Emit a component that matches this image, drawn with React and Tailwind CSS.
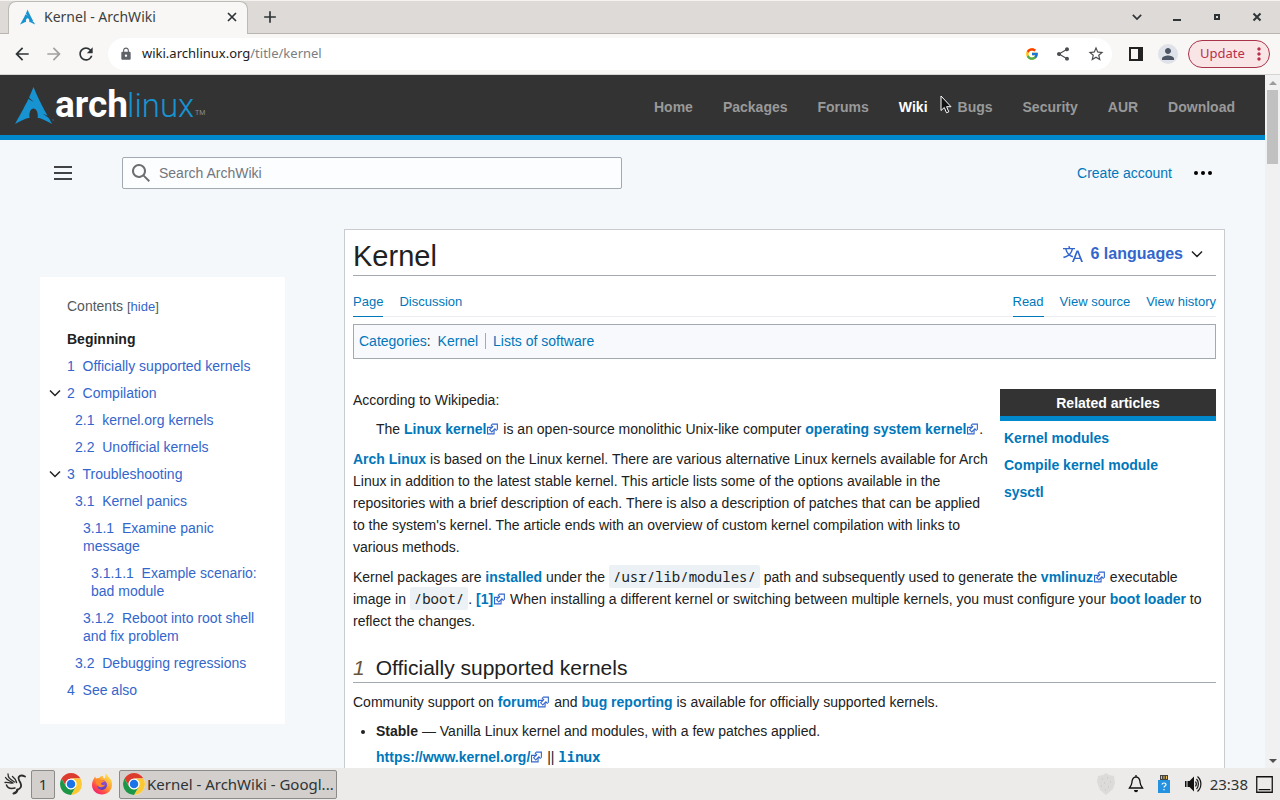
import React from "react";
import {
  MdArrowBack,
  MdArrowForward,
  MdRefresh,
  MdLock,
  MdShare,
  MdStarBorder,
  MdPerson,
  MdAdd,
  MdMoreVert,
} from "react-icons/md";
import { FcGoogle } from "react-icons/fc";
import { SiArchlinux } from "react-icons/si";

const NAV = ["Home", "Packages", "Forums", "Wiki", "Bugs", "Security", "AUR", "Download"];

const TOC = [
  { num: "1", text: "Officially supported kernels", level: 0 },
  { num: "2", text: "Compilation", level: 0, open: true },
  { num: "2.1", text: "kernel.org kernels", level: 1 },
  { num: "2.2", text: "Unofficial kernels", level: 1 },
  { num: "3", text: "Troubleshooting", level: 0, open: true },
  { num: "3.1", text: "Kernel panics", level: 1 },
  { num: "3.1.1", text: "Examine panic message", level: 2 },
  { num: "3.1.1.1", text: "Example scenario: bad module", level: 3 },
  { num: "3.1.2", text: "Reboot into root shell and fix problem", level: 2 },
  { num: "3.2", text: "Debugging regressions", level: 1 },
  { num: "4", text: "See also", level: 0 },
];

const INDENT = ["pl-0", "pl-2", "pl-4", "pl-6"];

function Chevron({ className }) {
  return (
    <svg viewBox="0 0 12 12" className={className} fill="none" stroke="currentColor" strokeWidth="1.5" aria-hidden="true">
      <path d="M1 3.5l5 5 5-5" />
    </svg>
  );
}

function ExternalIcon() {
  return (
    <svg viewBox="1 0.500 11 11" className="ml-px inline-block h-3 w-3 align-[-1px]" aria-hidden="true">
      <path fill="#fff" stroke="#36c" d="M1.5 4.518h5.982V10.5H1.5z" />
      <path fill="#36c" d="M5.765 1H11v5.39L9.427 7.937l-1.31-1.31L5.393 9.35l-2.69-2.688 2.81-2.808L4.2 2.544z" />
      <path fill="#fff" d="m9.995 2.004.022 4.885L8.2 5.07 5.32 7.95 4.09 6.723l2.882-2.88-1.85-1.852z" />
    </svg>
  );
}

function Link({ children, external }) {
  return (
    <a href="#" className="font-bold text-[#07b]">
      {children}
      {external && <ExternalIcon />}
    </a>
  );
}

function Code({ children }) {
  return (
    <code className="rounded-xs bg-[#ebf1f5] px-1 py-0.5 font-['Noto_Sans_Mono','DejaVu_Sans_Mono',monospace] text-sm leading-4">
      {children}
    </code>
  );
}

function ChromeLogo() {
  return (
    <svg viewBox="0 0 48 48" className="h-6 w-6 shrink-0" aria-hidden="true">
      <circle cx="24" cy="24" r="22" fill="#fff" />
      <path d="M24 13h19.05A22 22 0 0 0 4.95 13l9.52 16.5A11 11 0 0 1 24 13z" fill="#dc3c2e" />
      <path d="M33.53 29.5L24 46A22 22 0 0 0 43.05 13H24a11 11 0 0 1 9.53 16.5z" fill="#fcc934" />
      <path d="M14.47 29.5L4.95 13A22 22 0 0 0 24 46l9.53-16.5a11 11 0 0 1-19.06 0z" fill="#1e9648" />
      <circle cx="24" cy="24" r="10.5" fill="#fff" />
      <circle cx="24" cy="24" r="8.5" fill="#1a73e8" />
    </svg>
  );
}

function FirefoxLogo() {
  return (
    <svg viewBox="0 0 48 48" className="h-6 w-6" aria-hidden="true">
      <defs>
        <linearGradient id="ff-body" x1="0.85" y1="0.1" x2="0.2" y2="0.95">
          <stop offset="0" stopColor="#ffe14d" />
          <stop offset="0.45" stopColor="#ff9a2e" />
          <stop offset="0.75" stopColor="#ff4b4b" />
          <stop offset="1" stopColor="#f0206e" />
        </linearGradient>
        <linearGradient id="ff-core" x1="0.5" y1="0" x2="0.5" y2="1">
          <stop offset="0" stopColor="#9a4fe0" />
          <stop offset="1" stopColor="#5b3fc0" />
        </linearGradient>
      </defs>
      <path d="M31 3c5 4 6 8 9 10 3 4 5 8 4 14-1 10-9 18-20 18S4 37 4 26c0-6 2-10 4-13l2-4 2 4c2-1 4-1 6-1 2-3 5-4 8-4-1 2 0 4 4 5 1-4 1-7 1-10z" fill="url(#ff-body)" />
      <circle cx="24" cy="26" r="10" fill="url(#ff-core)" />
      <path d="M12 15c3-2 8-1 11 1 3 1 5 1 7 2-2 3-7 2-8 5 0 3 4 4 8 2-2 6-10 7-14 3-4-3-5-8-4-13z" fill="#ff8a2c" />
    </svg>
  );
}

function BirdLogo() {
  return (
    <svg viewBox="0 0 24 24" className="h-6 w-6" fill="none" stroke="#2c2c2c" strokeLinecap="round" strokeLinejoin="round" aria-hidden="true">
      <path d="M23 4.500c-2-1-5-1.500-6.200.5-1 2 .7 4 1.700 6 1.500 3.500 0 6-3.500 7" strokeWidth="1.800" />
      <path d="M15.500 17.500c-.3 2.200-1.800 3.500-4 4" strokeWidth="2" />
      <path d="M6 2c0 3.500 1.500 5 6.500 8M3.500 5.500c1.500 2.800 4 3 7.500 5.500M3 10.500c2.500-.3 4.500.2 7 .7" strokeWidth="1.300" />
      <path d="M4.500 13c1 3 4.500 4 8.500 3M10.500 4.500c2 1.500 3.500 3.500 4 6" strokeWidth="1.500" />
    </svg>
  );
}

function TabStrip() {
  return (
    <div className="flex h-[34px] shrink-0 items-stretch border-t border-[#f4f3f1] bg-[#dedad7] shadow-[inset_0_-1px_0_#b9b5b1]">
      <div className="ml-2 flex w-60 items-center rounded-t-lg border border-b-0 border-[#bdb9b5] bg-[#f8f7f6] pr-[7px] pb-[3px] pl-[11px]">
        <SiArchlinux className="h-4 w-4 text-[#1793d1]" />
        <span className="ml-2 flex-1 whitespace-nowrap text-[14px] text-[#3c3f40]">Kernel - ArchWiki</span>
        <button type="button" aria-label="Close tab" className="flex h-4 w-4 items-center justify-center text-[#2e3436]">
          <svg viewBox="0 0 16 16" className="h-4 w-4"><path d="M4 4l8 8M12 4l-8 8" stroke="currentColor" strokeWidth="1.700" /></svg>
        </button>
      </div>
      <button type="button" aria-label="New tab" className="ml-3 flex w-5 items-center justify-center pb-0.5 text-[#2e3436]">
        <MdAdd className="h-5 w-5" />
      </button>
      <div className="ml-auto flex items-center gap-6 pr-[15px] pb-0.5 text-[#2e3436]">
        <button type="button" aria-label="Search tabs" className="flex h-4 w-4 items-center justify-center">
          <Chevron className="h-2.5 w-2.5 stroke-2" />
        </button>
        <button type="button" aria-label="Minimize" className="flex h-4 w-4 items-center justify-center">
          <svg viewBox="0 0 16 16" className="h-4 w-4"><path d="M4 10h8v2H4z" fill="currentColor" /></svg>
        </button>
        <button type="button" aria-label="Maximize" className="flex h-4 w-4 items-center justify-center">
          <svg viewBox="0 0 16 16" className="h-4 w-4"><path d="M6 6h4v4H6z" fill="none" stroke="currentColor" strokeWidth="2" /></svg>
        </button>
        <button type="button" aria-label="Close window" className="flex h-4 w-4 items-center justify-center">
          <svg viewBox="0 0 16 16" className="h-4 w-4"><path d="M4.500 4.500l7 7M11.500 4.500l-7 7" stroke="currentColor" strokeWidth="2" /></svg>
        </button>
      </div>
    </div>
  );
}

function Toolbar() {
  return (
    <div className="flex h-[41px] shrink-0 items-center border-b border-[#d6d3d0] bg-[#f8f7f6] pr-2.5 pl-3 text-[#2e3436]">
      <div className="flex gap-3">
        <button type="button" aria-label="Back"><MdArrowBack className="h-5 w-5" /></button>
        <button type="button" aria-label="Forward" className="text-[#a3a19f]"><MdArrowForward className="h-5 w-5" /></button>
        <button type="button" aria-label="Reload"><MdRefresh className="h-5 w-5" /></button>
      </div>
      <div className="ml-3 flex h-8 flex-1 items-center rounded-full bg-white pr-[7px] pl-[11px]">
        <MdLock className="h-3.5 w-3.5 text-[#5f6368]" />
        <a href="#" className="ml-[9px] text-[13px] whitespace-nowrap text-[#202124]">
          wiki.archlinux.org<span className="text-[#7b7e81]">/title/kernel</span>
        </a>
        <div className="ml-auto flex items-center gap-4 text-[#4a4d50]">
          <FcGoogle className="h-3.5 w-3.5" />
          <button type="button" aria-label="Share"><MdShare className="h-4 w-4" /></button>
          <button type="button" aria-label="Bookmark"><MdStarBorder className="h-[18px] w-[18px]" /></button>
        </div>
      </div>
      <button type="button" aria-label="Side panel" className="ml-4">
        <svg viewBox="0 0 16 16" className="h-4 w-4"><path d="M1 1h14v14H1zm2 2v10h7V3z" fill="#222" fillRule="evenodd" /></svg>
      </button>
      <button type="button" aria-label="Profile" className="ml-3.5 flex h-5 w-5 items-center justify-center rounded-full bg-[#dfe2e8]">
        <MdPerson className="h-[18px] w-[18px] text-[#4c5564]" />
      </button>
      <button type="button" className="ml-2.5 flex h-7 w-[82px] items-center rounded-full border border-[#a8334a] bg-[#fae5e6] pl-[11px] text-[13px] text-[#b8304a]">
        Update
        <MdMoreVert className="ml-auto h-5 w-5" />
      </button>
    </div>
  );
}

function ArchHeader() {
  return (
    <header className="flex h-[65px] items-center border-b-[5px] border-[#08c] bg-[#333] pr-[30px] pl-[15px]">
      <a href="#" aria-label="Arch Linux" className="flex items-center">
        <SiArchlinux className="h-[39px] w-[39px] text-[#1793d1]" />
        <svg viewBox="0 0 152 56" className="h-14 w-[152px]">
          <text x="1" y="40" fontFamily="Roboto, sans-serif" fontSize="37" fontWeight="700" fill="#fff">arch</text>
          <text x="73" y="40" fontFamily="Roboto, sans-serif" fontSize="33" fontWeight="300" fill="#1793d1">linux</text>
          <text x="141" y="38" fontFamily="Roboto, sans-serif" fontSize="7" fill="#8a8a8a">TM</text>
        </svg>
      </a>
      <nav className="ml-auto flex gap-[30px] pt-1 text-sm font-bold text-[#999]">
        {NAV.map((item) => (
          <a key={item} href="#" className={item === "Wiki" ? "text-white" : ""}>{item}</a>
        ))}
      </nav>
    </header>
  );
}

function SearchRow() {
  return (
    <div className="mt-[17px] flex h-8 items-center px-3">
      <button type="button" aria-label="Main menu" className="text-[#404244]">
        <svg viewBox="0 0 22 16" className="h-4 w-[22px]"><path d="M2 1h18v2H2zM2 7h18v2H2zM2 13h18v2H2z" fill="currentColor" /></svg>
      </button>
      <form role="search" className="ml-12 flex h-8 max-w-[500px] flex-1 items-center rounded-xs border border-[#a2a9b1] bg-[#fcfdfe] pl-2">
        <svg viewBox="0 0 20 20" className="h-5 w-5 text-[#6c6f72]" aria-hidden="true">
          <path d="M12.200 13.600a7 7 0 1 1 1.400-1.400l5.400 5.400-1.400 1.400zM3 8a5 5 0 1 0 10 0A5 5 0 0 0 3 8z" fill="currentColor" />
        </svg>
        <input type="search" aria-label="Search ArchWiki" placeholder="Search ArchWiki" className="ml-2 min-w-0 flex-1 bg-transparent text-sm outline-none placeholder:text-[#72777d]" />
      </form>
      <div className="ml-auto flex items-center gap-[21px]">
        <a href="#" className="text-sm text-[#07b]">Create account</a>
        <button type="button" aria-label="Personal tools">
          <svg viewBox="0 0 20 20" className="h-5 w-5"><circle cx="3" cy="10" r="2" /><circle cx="10" cy="10" r="2" /><circle cx="17" cy="10" r="2" /></svg>
        </button>
      </div>
    </div>
  );
}

function Contents() {
  return (
    <nav aria-label="Contents" className="mt-12 self-start bg-white px-[27px] pt-5 pb-[25px] text-sm leading-[18px] text-[#36c]">
      <div className="text-[#54595d]">
        Contents <span className="text-[13px]">[<button type="button" className="text-[#36c]">hide</button>]</span>
      </div>
      <ul className="mt-3.5 flex flex-col gap-[9px]">
        <li><a href="#" className="font-bold text-[#202122]">Beginning</a></li>
        {TOC.map((t) => (
          <li key={t.num} className={INDENT[t.level]}>
            {t.open && (
              <button type="button" aria-label={"Toggle " + t.text} className="float-left -ml-[18px] flex h-[18px] w-[18px] items-center text-[#202122]">
                <Chevron className="h-3 w-3" />
              </button>
            )}
            <a href="#">{t.num + "\u00a0\u00a0" + t.text}</a>
          </li>
        ))}
      </ul>
    </nav>
  );
}

function Article() {
  return (
    <main className="min-w-0 border border-[#c8ccd1] bg-white px-2 pb-10 text-sm leading-[22px] text-[#202122]">
      <div className="flex h-[46px] items-center justify-between border-b border-[#a2a9b1] pt-1.5">
        <h1 className="text-[29px] leading-9">Kernel</h1>
        <button type="button" className="mr-[13px] flex items-center pb-1 text-base font-bold text-[#36c]">
          <svg viewBox="0 0 20 20" className="mr-2 h-5 w-5" fill="currentColor" aria-hidden="true">
            <path d="M20 18h-1.440a.61.61 0 0 1-.4-.12.81.81 0 0 1-.23-.31L17 15h-5l-1 2.540a.77.77 0 0 1-.22.3.59.59 0 0 1-.4.14H9l4.550-11.470h1.890zm-3.530-4.310L14.890 9.500a11.620 11.620 0 0 1-.39-1.240q-.09.37-.19.69l-.19.56-1.580 4.190zm-6.300-1.580a13.430 13.430 0 0 1-2.910-1.410 11.460 11.460 0 0 0 2.810-5.370H12V4H7.310a4 4 0 0 0-.2-.56C6.870 2.790 6.600 2 6.600 2l-1.470.5s.4.89.6 1.500H0v1.330h2.150A11.230 11.230 0 0 0 5 10.700a17.190 17.190 0 0 1-5 2.100q.56.82.87 1.380a23.280 23.280 0 0 0 5.220-2.510 15.640 15.640 0 0 0 3.560 1.770zM3.630 5.330h4.910a8.110 8.110 0 0 1-2.450 4.450 9.110 9.110 0 0 1-2.460-4.450z" />
          </svg>
          6 languages
          <Chevron className="ml-2 h-3 w-3 text-[#202122]" />
        </button>
      </div>
      <div className="mt-3.5 flex justify-between border-b border-[#eaecf0] text-[13px] text-[#07b]">
        <div className="flex gap-4">
          <a href="#" className="-mb-px border-b border-[#07b] pt-px pb-[3px]">Page</a>
          <a href="#" className="pt-px">Discussion</a>
        </div>
        <div className="flex gap-4">
          <a href="#" className="-mb-px border-b border-[#07b] pt-px pb-[3px]">Read</a>
          <a href="#" className="pt-px">View source</a>
          <a href="#" className="pt-px">View history</a>
        </div>
      </div>
      <div className="mt-[7px] flex h-[35px] items-center border border-[#a2a9b1] bg-[#f8f9fc] px-[5px] pb-px text-[#07b]">
        <a href="#">Categories</a><span className="mr-[7px] text-[#202122]">:</span>
        <a href="#" className="mr-[7px] border-r border-[#a2a9b1] pr-[7px] leading-4">Kernel</a>
        <a href="#">Lists of software</a>
      </div>
      <div className="mt-[30px]">
        <aside className="float-right ml-3 w-[216px] pb-12">
          <div className="border-b-[5px] border-[#08c] bg-[#333] pt-[3px] pb-0.5 text-center font-bold leading-[22px] text-white">Related articles</div>
          <ul className="mt-1.5 flex flex-col gap-[5px] pl-1">
            <li><Link>Kernel modules</Link></li>
            <li><Link>Compile kernel module</Link></li>
            <li><Link>sysctl</Link></li>
          </ul>
        </aside>
        <p>According to Wikipedia:</p>
        <p className="mt-[7px] pl-[23px]">
          The <Link external>Linux kernel</Link> is an open-source monolithic Unix-like computer <Link external>operating system kernel</Link>.
        </p>
        <p className="mt-2">
          <Link>Arch Linux</Link> is based on the Linux kernel. There are various alternative Linux kernels available for Arch Linux in addition to the latest stable kernel. This article lists some of the options available in the repositories with a brief description of each. There is also a description of patches that can be applied to the system's kernel. The article ends with an overview of custom kernel compilation with links to various methods.
        </p>
        <p className="mt-2">
          Kernel packages are <Link>installed</Link> under the <Code>/usr/lib/modules/</Code>{" "} path and subsequently used to generate the <Link external>vmlinuz</Link> executable image in <Code>/boot/</Code>. <Link external>[1]</Link> When installing a different kernel or switching between multiple kernels, you must configure your <Link>boot loader</Link> to reflect the changes.
        </p>
        <h2 className="mt-[22px] border-b border-[#a2a9b1] text-[21px] leading-7">
          <span className="mr-[11px] text-[#69533a] italic">1</span>Officially supported kernels
        </h2>
        <p className="mt-2">
          Community support on <Link external>forum</Link> and <Link>bug reporting</Link> is available for officially supported kernels.
        </p>
        <ul className="mt-[7px] list-disc pl-[23px]">
          <li>
            <b>Stable</b> — Vanilla Linux kernel and modules, with a few patches applied.
            <div className="mt-1">
              <Link external>https://www.kernel.org/</Link> || <a href="#" className="font-['Noto_Sans_Mono','DejaVu_Sans_Mono',monospace] font-bold leading-4 text-[#07b]">linux</a>
            </div>
          </li>
        </ul>
      </div>
    </main>
  );
}

function Scrollbar() {
  return (
    <div className="flex w-[15px] shrink-0 flex-col items-center justify-between bg-[#f1f1f1] py-1" aria-hidden="true">
      <div className="flex flex-col items-center gap-1">
        <svg viewBox="0 0 8 6" className="mt-px h-1.5 w-2"><path d="M0 5l4-4 4 4z" fill="#9b9b9b" /></svg>
        <div className="h-[74px] w-[11px] bg-[#c1c1c1]" />
      </div>
      <svg viewBox="0 0 8 6" className="h-1.5 w-2"><path d="M0 1l4 4 4-4z" fill="#505050" /></svg>
    </div>
  );
}

function Taskbar() {
  return (
    <footer className="flex h-8 shrink-0 items-center bg-[#edebe9] pr-[7px] pl-0.5 text-[15px] text-[#2e3436]">
      <button type="button" aria-label="Applications"><BirdLogo /></button>
      <button type="button" aria-label="Workspace 1" className="ml-[5px] flex h-[29px] w-6 items-center justify-center rounded-xs border border-[#8d8b89] bg-[#d2cfcc]">1</button>
      <button type="button" aria-label="Google Chrome" className="ml-1"><ChromeLogo /></button>
      <button type="button" aria-label="Firefox" className="ml-[7px]"><FirefoxLogo /></button>
      <button type="button" className="ml-[5px] flex h-[29px] w-[218px] items-center gap-px rounded-xs border border-[#8d8b89] bg-[#d2cfcc] pl-0.5 whitespace-nowrap">
        <ChromeLogo />
        Kernel - ArchWiki - Googl...
      </button>
      <div className="ml-auto flex items-center">
        <svg viewBox="0 0 20 22" className="mr-3 h-[22px] w-5" aria-hidden="true">
          <path d="M10 0l3 2 5 1 1 7-2 6-7 6-6-5-3-8 1-6 5-1z" fill="#dddbd9" />
          <path d="M6 6h1M11 5h1M14 9h1M8 10h1M5 13h1M12 14h1M9 17h1" stroke="#d0cecc" strokeWidth="2" />
        </svg>
        <svg viewBox="0 0 16 18" className="mr-3.5 h-[18px] w-4" aria-hidden="true">
          <path d="M8 2c-3.500 0-4 3-4.200 6-.1 2-.8 3-2.300 5h13c-1.500-2-2.200-3-2.300-5C12 5 11.500 2 8 2zM8 0v2" fill="none" stroke="#111" strokeWidth="1.300" />
          <path d="M6 15h4c0 3-4 3-4 0z" fill="#111" />
        </svg>
        <svg viewBox="0 0 12 18" className="mr-3.5 h-[18px] w-3" aria-hidden="true">
          <path d="M2 0h8v5H2z" fill="#444" />
          <path d="M3 1h1v3H3zM5.500 1h1v3h-1zM8 1h1v3H8z" fill="#e8bd57" />
          <path d="M0 5h12v13H0z" fill="#2492df" />
          <path d="M4 9.500c.3-2 4-2 4 0 0 1.500-2 1.300-2 3M6 14v1.300" stroke="#fff" strokeWidth="1.200" fill="none" />
        </svg>
        <svg viewBox="0 0 18 18" className="mr-2 h-[18px] w-[18px]" aria-hidden="true">
          <path d="M1 6h1.500v6H1zM3.500 6h2L10 1.500v15L5.500 12h-2z" fill="#111" />
          <path d="M11.500 6.500c1 1.500 1 3.500 0 5M12.500 4c2.500 2.500 2.500 7.500 0 10M13.500 1.500c4.500 4 4.500 11 0 15" fill="none" stroke="#111" strokeWidth="1.200" />
        </svg>
        <time>23:38</time>
        <svg viewBox="0 0 16 16" className="ml-2 h-[17px] w-[17px]" aria-hidden="true">
          <path d="M.7.7h14.600v14.600H.7zM2.500 12.800h11" fill="none" stroke="#111" strokeWidth="1.200" />
        </svg>
      </div>
    </footer>
  );
}

export default function App() {
  return (
    <div className="relative flex h-screen flex-col overflow-hidden bg-[#f4f8fb] font-['Noto_Sans','Open_Sans',sans-serif]">
      <TabStrip />
      <Toolbar />
      <div className="flex min-h-0 flex-1">
        <div className="min-w-0 flex-1 overflow-hidden font-['Liberation_Sans',Arial,sans-serif]">
          <ArchHeader />
          <div className="px-10">
            <SearchRow />
            <div className="mt-10 grid grid-cols-[245px_minmax(0,1fr)] gap-x-[59px]">
              <Contents />
              <Article />
            </div>
          </div>
        </div>
        <Scrollbar />
      </div>
      <Taskbar />
      <svg viewBox="0 0 12 19" className="pointer-events-none absolute top-[95px] left-[940px] h-[19px] w-3" aria-hidden="true">
        <path d="M1 1v14.500l3.300-3 2.200 5.300 2.300-1-2.200-5.100H11z" fill="#111" stroke="#fff" strokeWidth="1" />
      </svg>
    </div>
  );
}
